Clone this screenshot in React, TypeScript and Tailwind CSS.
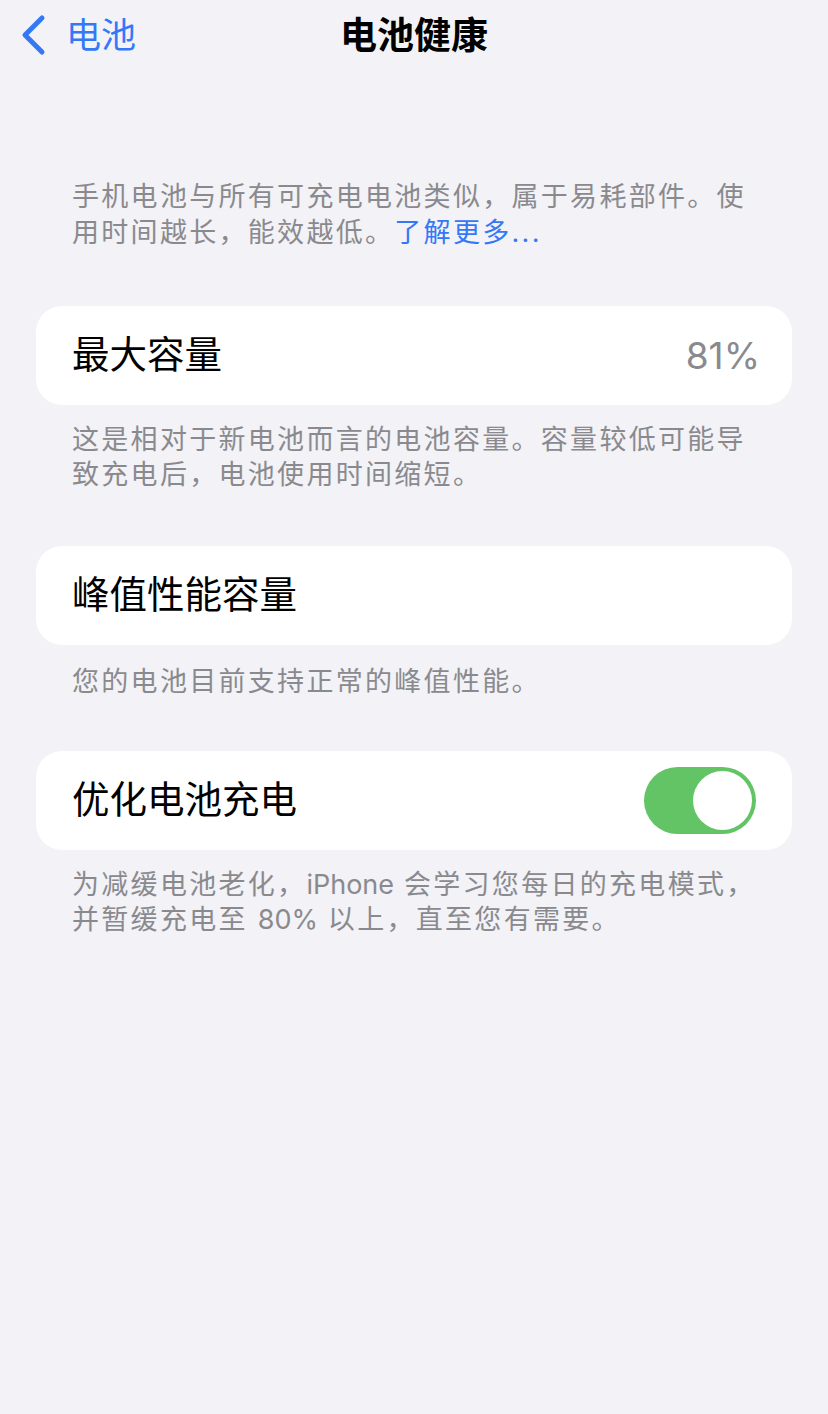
const FONT = "font-['Inter','Noto_Sans_CJK_SC',sans-serif]";

function Toggle() {
  return (
    <div className="w-[112px] h-[67px] rounded-full bg-[#63c466] p-[4px] flex justify-end mr-[4px]">
      <div className="w-[59px] h-[59px] rounded-full bg-white" />
    </div>
  );
}

function Card({ children }: { children: React.ReactNode }) {
  return (
    <div className="mx-[36px] h-[99px] rounded-[26px] bg-white pl-[36px] pr-[32px] flex items-center justify-between">
      {children}
    </div>
  );
}

function Caption({ children, className = "" }: { children: React.ReactNode; className?: string }) {
  return (
    <p className={`pl-[72px] pr-[64px] text-[27px] tracking-[2.3px] text-[#8a8a8e] ${className}`}>
      {children}
    </p>
  );
}

export default function App() {
  return (
    <div className={`min-h-[1414px] w-[828px] bg-[#f2f2f7] ${FONT}`}>
      {/* Nav bar */}
      <div className="relative h-[70px] flex items-center">
        <div className="flex items-center pl-[20px] gap-[20px] text-[#3478f6]">
          <svg width="26" height="42" viewBox="0 0 26 42" fill="none">
            <path d="M22 4 L5 21 L22 38" stroke="#3478f6" strokeWidth="5" strokeLinecap="round" strokeLinejoin="round" />
          </svg>
          <span className="text-[35px] leading-none">电池</span>
        </div>
        <div className="absolute inset-x-0 top-0 h-[70px] flex items-center justify-center pointer-events-none">
          <span className="text-[37px] font-bold leading-none text-black">电池健康</span>
        </div>
      </div>

      <Caption className="pt-[109px] leading-[36px]">
        手机电池与所有可充电电池类似，属于易耗部件。使用时间越长，能效越低。<span className="text-[#3478f6]">了解更多...</span>
      </Caption>

      <div className="mt-[55px]">
        <Card>
          <span className="text-[37.5px] text-black">最大容量</span>
          <span className="text-[37px] text-[#8a8a8e]">81%</span>
        </Card>
      </div>
      <Caption className="mt-[17px] leading-[35px]">
        这是相对于新电池而言的电池容量。容量较低可能导致充电后，电池使用时间缩短。
      </Caption>

      <div className="mt-[54px]">
        <Card>
          <span className="text-[37.5px] text-black">峰值性能容量</span>
        </Card>
      </div>
      <Caption className="mt-[19px] leading-[35px]">您的电池目前支持正常的峰值性能。</Caption>

      <div className="mt-[52px]">
        <Card>
          <span className="text-[37.5px] text-black">优化电池充电</span>
          <Toggle />
        </Card>
      </div>
      <Caption className="mt-[17px] leading-[35px]">
        为减缓电池老化，<span className="tracking-normal">iPhone</span> 会学习您每日的充电模式，并暂缓充电至 <span className="tracking-normal">80%</span> 以上，直至您有需要。
      </Caption>
    </div>
  );
}
